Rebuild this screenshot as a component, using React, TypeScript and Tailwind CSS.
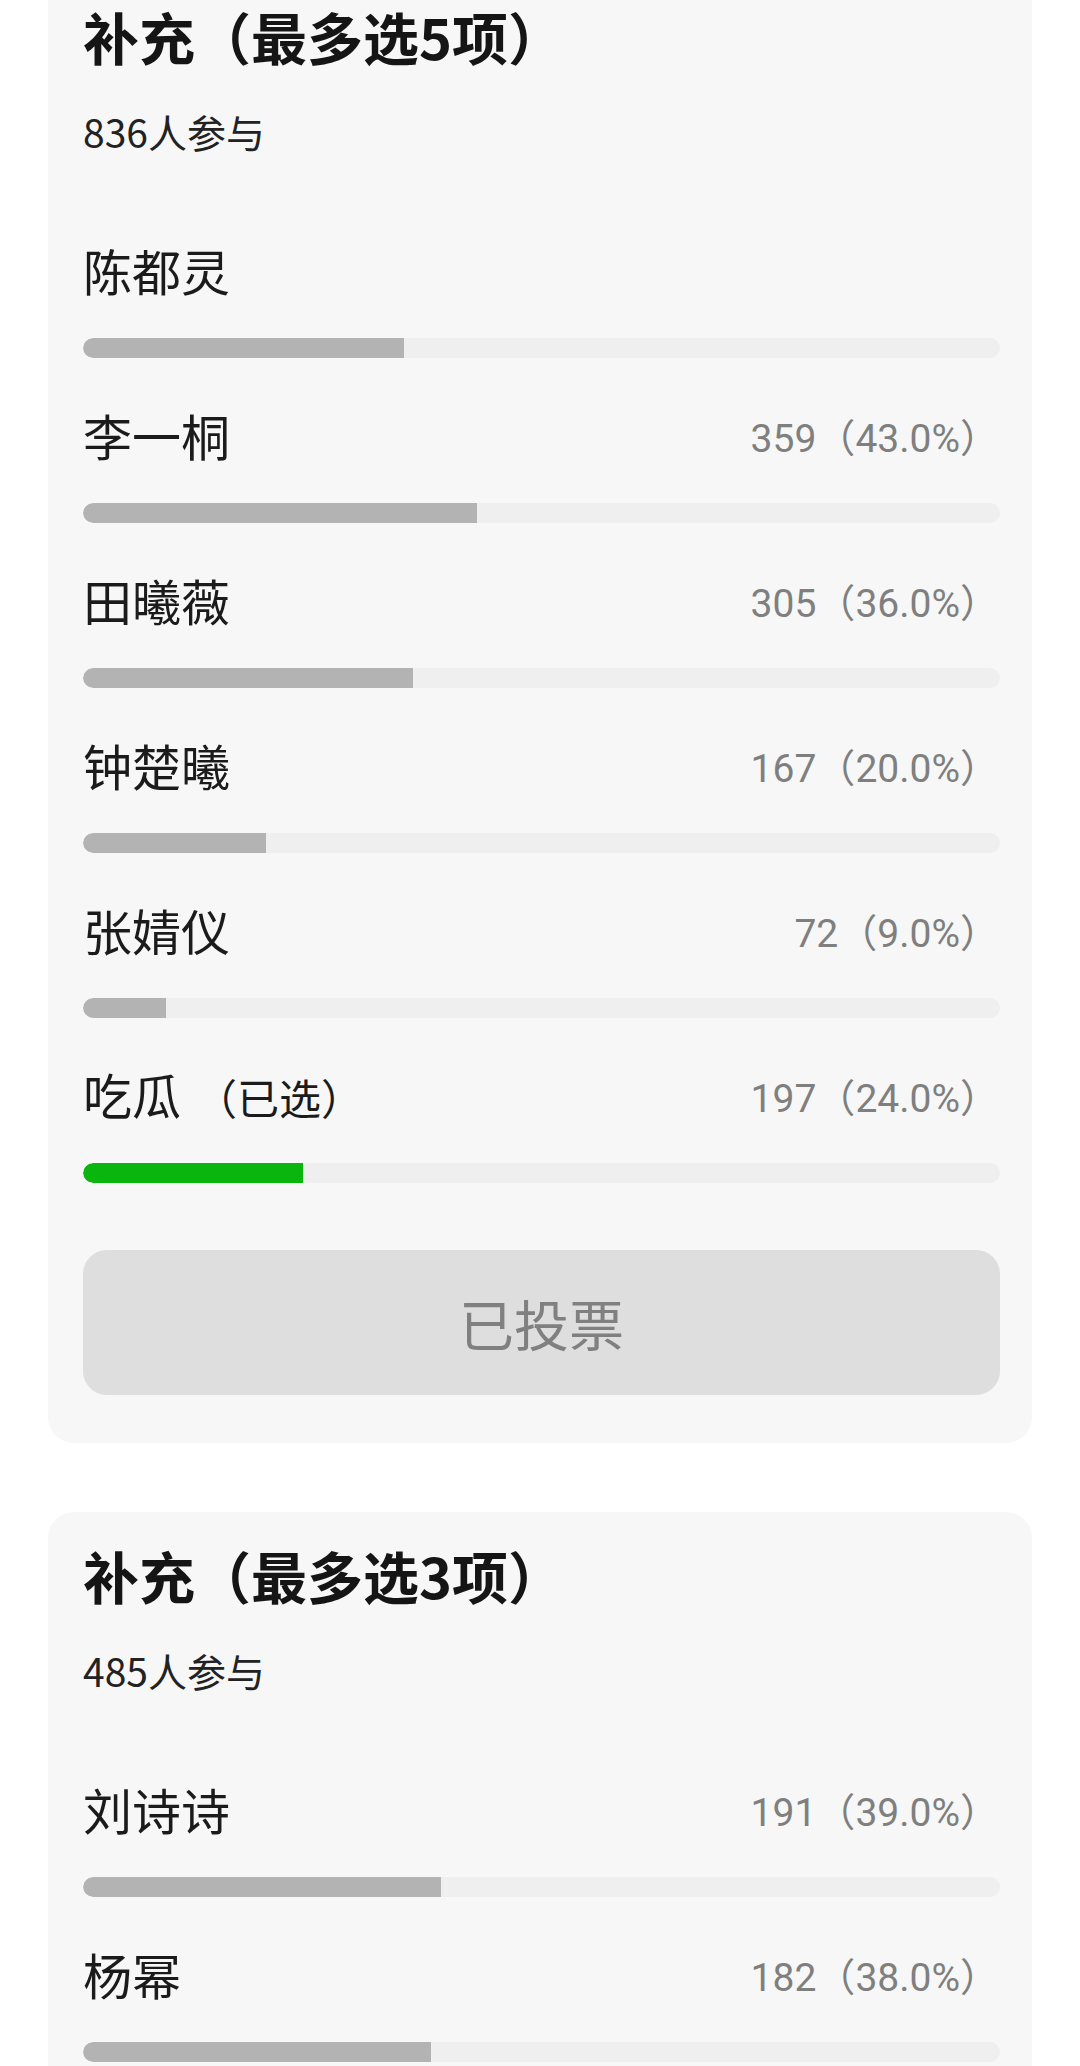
import type { ReactNode } from 'react'

interface Option {
  name: string
  votes?: string
  pct: number
  selected?: boolean
}

interface PollCardProps {
  title: string
  count: number
  options: Option[]
  voted?: boolean
  className?: string
}

function OptionRow({ option }: { option: Option }) {
  return (
    <div>
      <div className="flex h-[60px] items-center justify-between">
        <span className="text-[49px] leading-[60px] text-[#1b1b1b]">
          {option.name}
          {option.selected && <span className="ml-[14px] text-[42px]">（已选）</span>}
        </span>
        {option.votes && (
          <span className="mt-[8px] mr-[1px] font-['Roboto','Noto_Sans_CJK_SC',sans-serif] text-[39px] text-[#7f7f7f]">
            {option.votes}（{option.pct.toFixed(1)}%）
          </span>
        )}
      </div>
      <div className="mt-[38px] h-[20px] overflow-hidden rounded-full bg-[#efefef]">
        <div
          className={
            option.selected
              ? 'h-full rounded-l-full bg-[#0ab60e]'
              : 'h-full rounded-l-full bg-[#b3b3b3]'
          }
          style={{ width: `${option.pct}%` }}
        />
      </div>
    </div>
  )
}

function PollCard({ title, count, options, voted, className = '' }: PollCardProps) {
  return (
    <div className={`mx-[48px] rounded-[26px] bg-[#f7f7f7] pt-[28px] pb-[48px] pl-[35px] pr-[32px] ${className}`}>
      <h2 className="text-[56px] font-bold leading-[70px] text-[#151515]">{title}</h2>
      <p className="mt-[37px] text-[39px] leading-[46px] text-[#222222]">{count}人参与</p>
      <div className="mt-[86px] flex flex-col gap-[47px]">
        {options.map((o) => (
          <OptionRow key={o.name} option={o} />
        ))}
      </div>
      {voted && (
        <div className="mt-[67px] flex h-[145px] items-center justify-center rounded-[24px] bg-[#dedede] text-[55px] text-[#808080]">
          已投票
        </div>
      )}
    </div>
  )
}

function Page({ children }: { children: ReactNode }) {
  return (
    <div className="h-[2066px] w-[1080px] overflow-hidden bg-white font-['Noto_Sans_CJK_SC',sans-serif]">
      {children}
    </div>
  )
}

export default function App() {
  return (
    <Page>
      <PollCard
        className="-mt-[27px]"
        title="补充（最多选5项）"
        count={836}
        voted
        options={[
          { name: '陈都灵', pct: 35 },
          { name: '李一桐', votes: '359', pct: 43 },
          { name: '田曦薇', votes: '305', pct: 36 },
          { name: '钟楚曦', votes: '167', pct: 20 },
          { name: '张婧仪', votes: '72', pct: 9 },
          { name: '吃瓜', votes: '197', pct: 24, selected: true },
        ]}
      />
      <PollCard
        className="mt-[69px]"
        title="补充（最多选3项）"
        count={485}
        options={[
          { name: '刘诗诗', votes: '191', pct: 39 },
          { name: '杨幂', votes: '182', pct: 38 },
        ]}
      />
    </Page>
  )
}
